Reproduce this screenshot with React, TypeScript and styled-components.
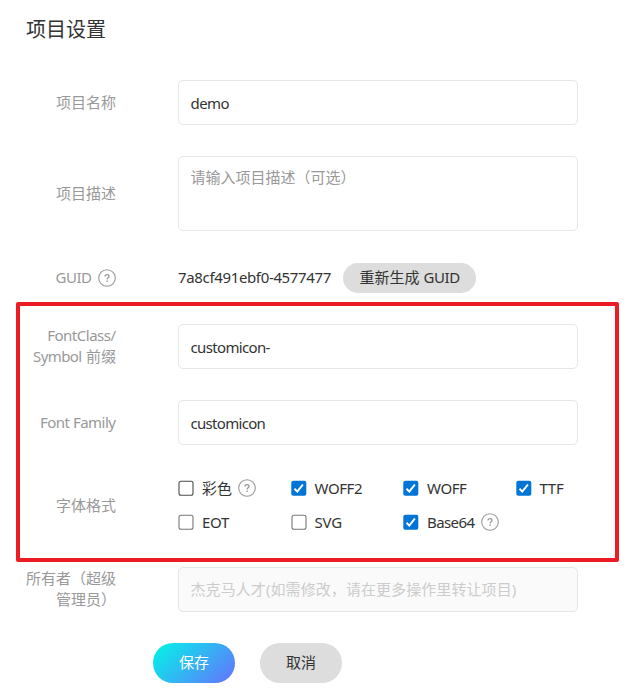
import React from 'react';
import styled, { createGlobalStyle } from 'styled-components';

const GlobalStyle = createGlobalStyle`
  * { box-sizing: border-box; }
  body {
    margin: 0;
    background: #fff;
    color: #333;
    font: 15px/21px "Noto Sans", "Noto Sans CJK SC", sans-serif;
  }
  input, textarea, button { font: inherit; color: inherit; }
`;

const Page = styled.main`
  position: relative;
  width: 637px;
  height: 696px;
  padding: 16px 0 0 26px;
  overflow: hidden;
`;

const Title = styled.h1`
  margin: 0;
  height: 64px;
  font-size: 20px;
  line-height: 28px;
  font-weight: 400;
`;

const Row = styled.div<{ $h: number; $gap?: number }>`
  display: grid;
  grid-template-columns: 90px 400px;
  column-gap: 62px;
  align-items: center;
  height: ${p => p.$h}px;
  margin-bottom: ${p => p.$gap ?? 31}px;
`;

const Label = styled.div<{ $lift?: number }>`
  display: flex;
  flex-direction: column;
  align-items: flex-end;
  color: #999;
  white-space: nowrap;
  padding-bottom: ${p => p.$lift ?? 0}px;
`;

const Text = styled.span<{ $track?: number }>`
  letter-spacing: ${p => p.$track ?? 0}px;
  margin-right: ${p => -(p.$track ?? 0)}px;
  white-space: nowrap;
`;

const Raised = styled.div`
  display: flex;
  padding-bottom: 2px;
`;

const Inline = styled.div<{ $gap: number }>`
  display: flex;
  align-items: center;
  gap: ${p => p.$gap}px;
`;

const Input = styled.input<{ $track?: number; $drop?: number }>`
  width: 400px;
  height: 45px;
  padding: ${p => p.$drop ?? 1}px 11.5px 0;
  border: 1px solid #e6e6e6;
  border-radius: 5px;
  background: #fff;
  outline: 0;
  letter-spacing: ${p => p.$track ?? 0}px;
  &:disabled { background: #fafafa; padding: 0 11.5px 2px; }
  &::placeholder { color: #ccc; opacity: 1; }
`;

const TextArea = styled.textarea`
  display: block;
  width: 400px;
  height: 75px;
  padding: 10px 11.5px;
  border: 1px solid #e6e6e6;
  border-radius: 5px;
  resize: none;
  outline: 0;
  &::placeholder { color: #999; opacity: 1; }
`;

const Pill = styled.button<{ $primary?: boolean; $w: number; $h: number }>`
  display: flex;
  align-items: center;
  justify-content: center;
  width: ${p => p.$w}px;
  height: ${p => p.$h}px;
  padding: 0 0 2px;
  border: 0;
  border-radius: 20px;
  color: ${p => (p.$primary ? '#fff' : '#333')};
  background: ${p => (p.$primary ? 'linear-gradient(135deg, #00f7e7 0%, #6671ff 100%)' : '#ddd')};
`;

const Options = styled.div`
  display: grid;
  grid-template-columns: repeat(4, 112.5px);
  grid-auto-rows: 34px;
`;

const Option = styled.label`
  display: flex;
  align-items: center;
  gap: 8px;
  padding-bottom: 2px;
`;

const Graphic = styled.svg`
  flex: none;
  display: block;
`;

const Actions = styled.div`
  display: flex;
  gap: 25px;
  padding-left: 127px;
`;

const Highlight = styled.div`
  position: absolute;
  left: 16px;
  top: 302px;
  width: 603px;
  height: 260px;
  border: 4px solid #ed1c24;
  border-radius: 2px;
  pointer-events: none;
`;

const Help = () => (
  <Graphic width="18" height="18" viewBox="0 0 18 18" fill="none" stroke="#999">
    <circle cx="9" cy="9" r="8.3" strokeWidth="1.1" />
    <path d="M7 7.6C7 6.3 7.8 5.7 9 5.7s2 .7 2 1.7c0 1.4-1.9 1.5-1.9 3" strokeWidth="1.3" />
    <path d="M9.1 11.5v1.4" strokeWidth="1.4" />
  </Graphic>
);

const Check = ({ on, dark }: { on?: boolean; dark?: boolean }) => (
  <Graphic width="16" height="16" viewBox="0 0 16 16" fill="none">
    {on ? (
      <>
        <rect x=".3" y=".8" width="15" height="15" rx="2" fill="#0075d5" />
        <path d="M3.5 8.8l2.8 2.8 5.6-7.1" stroke="#fff" strokeWidth="2" />
      </>
    ) : (
      <rect x="1" y="1.3" width="14" height="14" rx="2" stroke={dark ? '#4c4c4c' : '#777'} strokeWidth="1.1" />
    )}
  </Graphic>
);

const formats = [
  { name: '彩色', help: true, dark: true },
  { name: 'WOFF2', on: true, track: -0.4 },
  { name: 'WOFF', on: true, track: -0.4 },
  { name: 'TTF', on: true, track: -0.3 },
  { name: 'EOT', track: -0.3 },
  { name: 'SVG', track: -0.2 },
  { name: 'Base64', on: true, help: true, track: -0.6 },
];

export default function App() {
  return (
    <Page>
      <GlobalStyle />
      <Title>项目设置</Title>
      <Row $h={45}>
        <Label>项目名称</Label>
        <Input defaultValue="demo" $track={-0.6} />
      </Row>
      <Row $h={75} $gap={32}>
        <Label>项目描述</Label>
        <TextArea placeholder="请输入项目描述（可选）" />
      </Row>
      <Row $h={30}>
        <Label $lift={1}>
          <Inline $gap={6}><Text $track={-0.5}>GUID</Text><Help /></Inline>
        </Label>
        <Inline $gap={12}>
          <Raised><Text $track={-0.35}>7a8cf491ebf0-4577477</Text></Raised>
          <Pill $w={133} $h={30}><Text>重新生成 <Text $track={-0.4}>GUID</Text></Text></Pill>
        </Inline>
      </Row>
      <Row $h={45}>
        <Label $lift={2}>
          <Text $track={-0.5}>FontClass/</Text>
          <Text><Text $track={-0.6}>Symbol</Text> 前缀</Text>
        </Label>
        <Input defaultValue="customicon-" $track={-0.65} $drop={0} />
      </Row>
      <Row $h={45} $gap={27}>
        <Label><Text $track={-0.5}>Font Family</Text></Label>
        <Input defaultValue="customicon" $track={-0.7} />
      </Row>
      <Row $h={68} $gap={27}>
        <Label $lift={2}>字体格式</Label>
        <Options>
          {formats.map(f => (
            <Option key={f.name}>
              <Check on={f.on} dark={f.dark} />
              <Inline $gap={6}>
                <Text $track={f.track}>{f.name}</Text>
                {f.help && <Help />}
              </Inline>
            </Option>
          ))}
        </Options>
      </Row>
      <Row $h={45}>
        <Label $lift={2}>
          <Text>所有者（超级</Text>
          <Text>管理员）</Text>
        </Label>
        <Input disabled $track={0.08} placeholder="杰克马人才(如需修改，请在更多操作里转让项目)" />
      </Row>
      <Actions>
        <Pill $primary $w={82} $h={40}>保存</Pill>
        <Pill $w={82} $h={40}>取消</Pill>
      </Actions>
      <Highlight />
    </Page>
  );
}
